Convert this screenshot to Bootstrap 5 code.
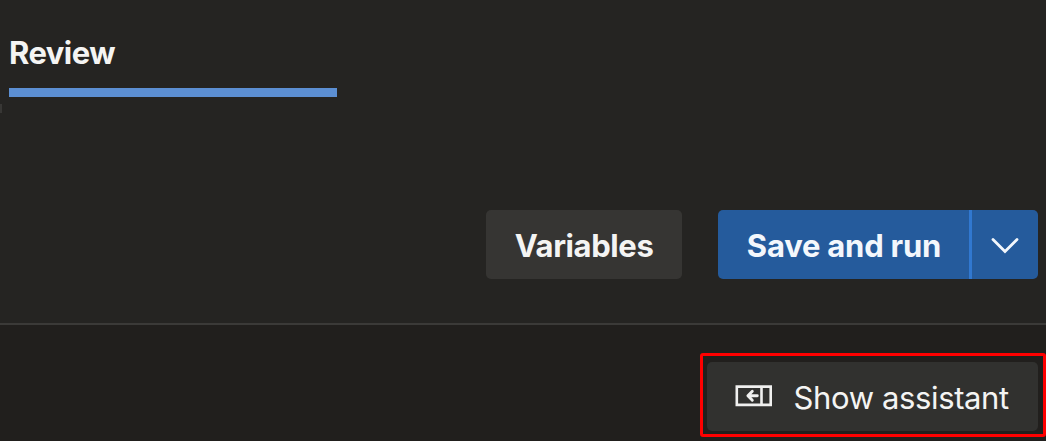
<!DOCTYPE html>
<html lang="en" data-bs-theme="dark">
<head>
<meta charset="utf-8">
<meta name="viewport" content="width=device-width, initial-scale=1">
<title>Review</title>
<link href="https://cdn.jsdelivr.net/npm/bootstrap@5.3.0/dist/css/bootstrap.min.css" rel="stylesheet">
<style>
body{height:441px;overflow:hidden;background:#211f1d;color:#f4f4f3;font-family:Inter,"Liberation Sans",sans-serif;font-size:31px;line-height:40px}
.top-pane{height:325px;background:#252422;border-bottom:2px solid #3b3a38}
.step-head{height:210px;padding:33px 0 0 9px}
.step-tab{width:328px;height:64px;border-bottom:9px solid #5c8fd3;font-weight:700;letter-spacing:-.55px}
.edge-tick{width:2px;height:9px;margin:7px 0 0 -9px;background:#383735}
.tool-row{gap:36px;padding-right:8px}
.btn{--bs-btn-padding-y:0;--bs-btn-padding-x:0;--bs-btn-border-width:0px;--bs-btn-border-radius:5px;--bs-btn-color:#f4f4f3;--bs-btn-font-size:31px;--bs-btn-line-height:40px;height:69px;padding-top:2px;white-space:nowrap}
.btn-neutral{--bs-btn-bg:#363533;width:196px;font-weight:700;letter-spacing:-.4px}
.btn-run{--bs-btn-bg:#255b9c;--bs-btn-color:#f3f7fc;width:252px;font-weight:700;letter-spacing:-.22px}
.btn-more{--bs-btn-bg:#255b9c;width:69px;border-left:3px solid #3178d0!important}
.run-group{width:320px}
.assistant-frame{width:346px;height:84px;margin-top:28px;border:3px solid #f00;border-radius:3px;padding:6px 5px 0 4px}
.btn-assist{--bs-btn-bg:#31312f;width:331px;font-weight:400;letter-spacing:-.38px;padding-left:28px}
.btn-assist svg{margin-right:20.6px;margin-top:-3px}
</style>
</head>
<body>
<main>
  <section class="top-pane">
    <div class="step-head">
      <div class="step-tab">Review</div>
      <div class="edge-tick"></div>
    </div>
    <div class="tool-row d-flex justify-content-end">
      <button type="button" class="btn btn-neutral">Variables</button>
      <div class="btn-group run-group">
        <button type="button" class="btn btn-run flex-grow-0 flex-shrink-0">Save and run</button>
        <button type="button" class="btn btn-more flex-grow-0 flex-shrink-0 d-flex align-items-center justify-content-center" aria-label="More run options">
          <svg width="30" height="20" viewBox="0 0 30 20" fill="none" stroke="#f3f7fc" stroke-width="2.8" stroke-linecap="round"><path d="M3 3.5 15 15.5 27 3.5"/></svg>
        </button>
      </div>
    </div>
  </section>
  <section class="d-flex justify-content-end">
    <div class="assistant-frame">
      <button type="button" class="btn btn-assist d-flex align-items-center">
        <svg width="38" height="22" viewBox="0 0 38 22" fill="none" stroke="#f0f0ef"><path stroke-width="2.6" d="M1.8 1.6H35.7V19.9H1.8ZM26.5 1.6V19.9"/><path stroke-width="2.9" stroke-linecap="round" stroke-linejoin="round" d="M22.3 10.8H13.2M17.3 6.3 12.9 10.8 17.3 15.3"/></svg>
        <span>Show assistant</span>
      </button>
    </div>
  </section>
</main>
<script src="https://cdn.jsdelivr.net/npm/bootstrap@5.3.0/dist/js/bootstrap.bundle.min.js"></script>
</body>
</html>
